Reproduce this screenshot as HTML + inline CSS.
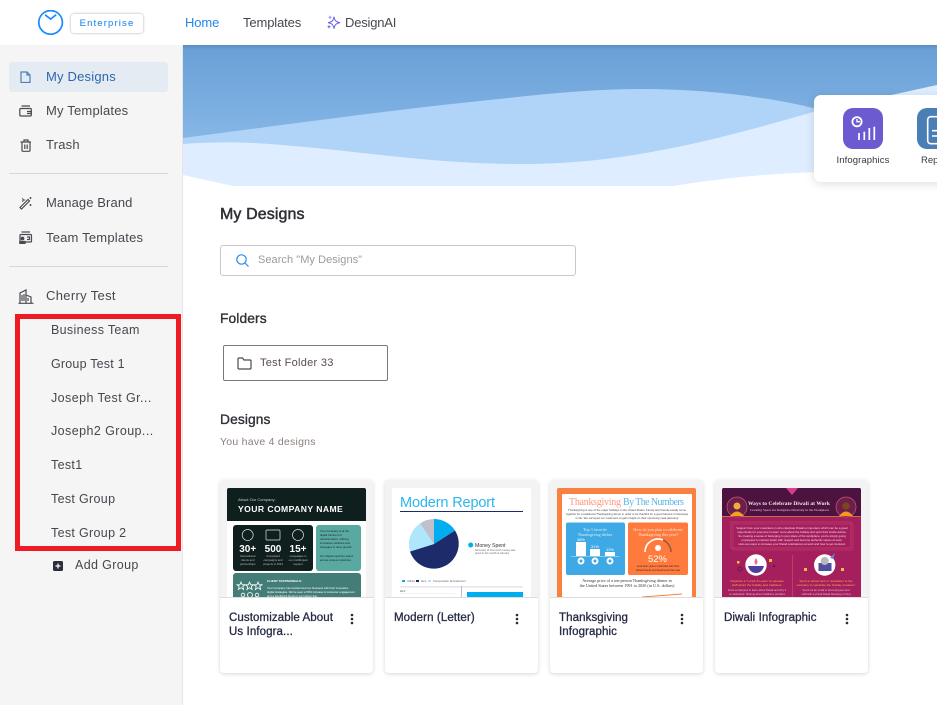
<!DOCTYPE html>
<html lang="en"><head><meta charset="utf-8"><title>My Designs</title>
<style>
*{box-sizing:border-box}
html,body{margin:0;padding:0;width:937px;height:705px;overflow:hidden;background:#fff;font-family:"Liberation Sans",sans-serif;color:#3d3d45}
.a{position:absolute}
.t{position:absolute;white-space:nowrap;line-height:16px;font-size:13px;letter-spacing:.2px;color:#47474f}
.nav{letter-spacing:-.12px}
.g{position:absolute;left:51px;white-space:nowrap;line-height:16px;font-size:12.5px;letter-spacing:.32px;color:#47474f}
.h{position:absolute;left:220px;white-space:nowrap;color:#2f3036;-webkit-text-stroke:.35px #2f3036}
.card{position:absolute;top:480px;width:153px;height:193px;background:#fff;border-radius:4px;box-shadow:0 1px 4px rgba(0,0,0,.16);overflow:hidden}
.card .top{position:absolute;left:0;top:0;width:153px;height:118px;background:#f3f3f3;border-bottom:1px solid #dedede}
.card svg.th{position:absolute;left:7px;top:8px;border-radius:2px 2px 0 0}
.card .n{position:absolute;left:9px;top:132px;width:112px;font-size:11.5px;line-height:13.5px;letter-spacing:.1px;color:#262a44;-webkit-text-stroke:.3px #262a44}
.card svg.m{position:absolute;left:130px;top:133px}
svg{display:block}
svg.i{position:absolute;fill:none;stroke:#4a4a50;stroke-width:1.2}
</style></head><body>

<!-- hero -->
<svg class="a" style="left:183px;top:45px" width="754" height="141" viewBox="0 0 754 141">
<defs><linearGradient id="hg" x1="0" y1="0" x2="0" y2="1"><stop offset="0" stop-color="#689fd6"/><stop offset="1" stop-color="#94c2ee"/></linearGradient></defs>
<rect width="754" height="141" fill="url(#hg)"/>
<path d="M0 93C100 80 200 66 288 57C360 49 410 44 457 44C520 44 580 51 630 63L754 92V141H0Z" fill="#b0d3f8"/>
<path d="M0 99C25 97 50 97 70 98C170 104 240 119 340 119C440 119 530 96 630 67L754 40V141H0Z" fill="#deedff"/>
<path d="M0 130L50 141H0Z" fill="#fff"/>
<path d="M490 141C540 133 590 128 640 127L754 125V141Z" fill="#fff"/>
</svg>

<!-- header -->
<div class="a" style="left:0;top:0;width:937px;height:45px;background:#fff;box-shadow:0 1px 4px rgba(0,0,0,.18)"></div>
<svg class="a" style="left:38px;top:10px" width="26" height="26" viewBox="0 0 26 26" fill="none" stroke="#1a8cff" stroke-width="1.7"><circle cx="12.6" cy="12.4" r="11.8"/><path d="M7.5 5.2L12.6 9L17.6 5.2" stroke-linecap="round"/></svg>
<div class="a" style="left:71px;top:14px;width:72px;height:18.5px;background:#fff;border-radius:3px;box-shadow:0 0 2.5px rgba(0,0,0,.35);text-align:center;font-size:9.5px;line-height:19.5px;letter-spacing:1.15px;color:#2a8cf0;-webkit-text-stroke:.1px #2a8cf0">Enterprise</div>
<div class="t nav" style="left:185px;top:15px;color:#1e88ee">Home</div>
<div class="t nav" style="left:243px;top:15px;color:#47474f">Templates</div>
<svg class="a" style="left:326px;top:14px" width="15" height="17" viewBox="0 0 15 17" fill="none" stroke="#6a5fe6" stroke-width="1"><path d="M8 2.7C8.5 6.5 10 8 14 8.7C10 9.3 8.5 11 8 14.7C7.5 11 6 9.3 2 8.7C6 8 7.5 6.5 8 2.7Z"/><path d="M4 1.3L4.6 2.7L6 3.3L4.6 3.9L4 5.3L3.4 3.9L2 3.3L3.4 2.7Z" fill="#9a80f0" stroke="none"/><path d="M3 10.7L3.6 12.1L5 12.7L3.6 13.3L3 14.7L2.4 13.3L1 12.7L2.4 12.1Z" fill="#4668e8" stroke="none"/></svg>
<div class="t nav" style="left:345px;top:15px;letter-spacing:-.2px">DesignAI</div>

<!-- sidebar -->
<div class="a" style="left:0;top:45px;width:183px;height:660px;background:#f5f5f5;border-right:1px solid #e6e6e6"></div>
<div class="a" style="left:9px;top:62px;width:159px;height:30px;background:#e4ebf3;border-radius:3px"></div>
<svg class="i" style="left:20px;top:71px;stroke:#4f80b8" width="11" height="12" viewBox="0 0 11 12"><path d="M1 1H7L10 4V11.5H1Z"/><path d="M7 1V4H10"/></svg>
<div class="t" style="left:46px;top:69px;color:#2a68ae">My Designs</div>
<svg class="i" style="left:19px;top:105px" width="14" height="12" viewBox="0 0 14 12"><rect x=".8" y="3.5" width="11.5" height="7.5" rx="1"/><path d="M2.5 1H11M8 6.5H12.3V8.5H8"/></svg>
<div class="t" style="left:46px;top:103px">My Templates</div>
<svg class="i" style="left:20px;top:139px" width="12" height="13" viewBox="0 0 12 13"><path d="M.5 3H11M2 3V11.5Q2 12.3 3 12.3H9Q10 12.3 10 11.5V3M4 3V1H8V3M4.8 5.5V10M7.2 5.5V10"/></svg>
<div class="t" style="left:46px;top:137px">Trash</div>
<div class="a" style="left:9px;top:173px;width:159px;height:1px;background:#d8d8d8"></div>
<svg class="i" style="left:19px;top:196px" width="14" height="14" viewBox="0 0 14 14"><path d="M1 11.5L9 3.5L10.5 5L2.5 13Z"/><path d="M3.5 2L4 3.5L5.5 4L4 4.5L3.5 6M11.5 1V3M10.5 2H12.5M11.5 8V10M10.5 9H12.5" stroke-width=".9"/></svg>
<div class="t" style="left:46px;top:195px;letter-spacing:.1px">Manage Brand</div>
<svg class="i" style="left:19px;top:231px" width="14" height="13" viewBox="0 0 14 13"><rect x="1" y="3.5" width="11.5" height="7.5" rx="1"/><path d="M2.5 1H11"/><circle cx="3.5" cy="7.5" r="1.3" fill="#4a4a50"/><path d="M.8 12.5V10.5H6V12.5Z" fill="#4a4a50"/><path d="M8 6H10.5V8.5H8"/></svg>
<div class="t" style="left:46px;top:230px">Team Templates</div>
<div class="a" style="left:9px;top:266px;width:159px;height:1px;background:#d8d8d8"></div>
<svg class="i" style="left:18px;top:289px" width="16" height="15" viewBox="0 0 16 15"><path d="M.5 14.3H15.5M2 14V4L8 1V14M8 6L13 8V14M4 6V12M6 5V12M10 9V12"/></svg>
<div class="t" style="left:46px;top:288px;letter-spacing:.33px">Cherry Test</div>
<div class="g" style="top:322px">Business Team</div>
<div class="g" style="top:356px;letter-spacing:.2px">Group Test 1</div>
<div class="g" style="top:390px;letter-spacing:.42px">Joseph Test Gr...</div>
<div class="g" style="top:423px;letter-spacing:.42px">Joseph2 Group...</div>
<div class="g" style="top:457px">Test1</div>
<div class="g" style="top:491px">Test Group</div>
<div class="g" style="top:525px">Test Group 2</div>
<svg class="a" style="left:53px;top:561px" width="10" height="10" viewBox="0 0 10 10"><rect width="10" height="10" rx="1.5" fill="#2b2e3a"/><path d="M5 2.5V7.5M2.5 5H7.5" stroke="#fff" stroke-width="1.2"/></svg>
<div class="t" style="left:75px;top:557px;font-size:12.5px;letter-spacing:.36px">Add Group</div>
<div class="a" style="left:15px;top:314px;width:166px;height:237px;border:5px solid #ed1c24"></div>

<!-- template types card -->
<div class="a" style="left:814px;top:95px;width:140px;height:87px;background:#fff;border-radius:7px;box-shadow:0 2px 10px rgba(0,0,0,.13)"></div>
<svg class="a" style="left:843px;top:108px" width="40" height="41" viewBox="0 0 40 41"><rect width="40" height="41" rx="10" fill="#6c5bd0"/><g fill="none" stroke="#fff"><circle cx="14" cy="13.7" r="4.6" stroke-width="1.8"/><path d="M14 11V13.7H17" stroke-width="1.4"/><path d="M16 32V25M21.3 32V23.7M26.3 32V20M31.3 32V18.7" stroke-width="1.7"/></g></svg>
<div class="a" style="left:823px;top:154px;width:80px;text-align:center;font-size:9.5px;line-height:14px;letter-spacing:.1px;color:#37373f">Infographics</div>
<svg class="a" style="left:917px;top:108px" width="40" height="41" viewBox="0 0 40 41"><rect width="40" height="41" rx="10" fill="#4a7fb5"/><g fill="none" stroke="#fff" stroke-width="1.6"><rect x="10.7" y="8.7" width="24" height="27" rx="3"/><path d="M15 22.7H30M15 28H30"/></g></svg>
<div class="a" style="left:921px;top:154px;font-size:9.5px;line-height:14px;color:#37373f">Rep</div>

<!-- content -->
<div class="h" style="top:206px;font-size:16px;line-height:18px;-webkit-text-stroke:.5px #2f3036;letter-spacing:.1px">My Designs</div>
<div class="a" style="left:220px;top:245px;width:356px;height:31px;border:1px solid #c9c9c9;border-radius:3px;background:#fff"></div>
<svg class="a" style="left:236px;top:254px" width="13" height="13" viewBox="0 0 13 13" fill="none" stroke="#2a8cf0" stroke-width="1.2"><circle cx="5.5" cy="5.5" r="4.7"/><path d="M9 9L12.5 12.5"/></svg>
<div class="t" style="left:258px;top:252px;font-size:11px;letter-spacing:.05px;color:#9b9b9b">Search "My Designs"</div>
<div class="h" style="top:311px;font-size:13.8px;line-height:16px;letter-spacing:.1px">Folders</div>
<div class="a" style="left:223px;top:345px;width:165px;height:36px;border:1px solid #7a7a7a;border-radius:2px;background:#fff"></div>
<svg class="a" style="left:237px;top:357px" width="15" height="13" viewBox="0 0 15 13" fill="none" stroke="#4a4a50" stroke-width="1.2"><path d="M1 11V2Q1 1 2 1H5.5L7 3H13Q14 3 14 4V11Q14 12 13 12H2Q1 12 1 11Z"/></svg>
<div class="t" style="left:260px;top:355px;font-size:11px;letter-spacing:.28px;color:#5a4a50">Test Folder 33</div>
<div class="h" style="top:412px;font-size:13.8px;line-height:16px;letter-spacing:.1px">Designs</div>
<div class="t" style="left:220px;top:434px;font-size:10.5px;letter-spacing:.25px;color:#8d7f7c">You have 4 designs</div>

<!-- card 1 -->
<div class="card" style="left:220px"><div class="top"></div>
<svg class="th" width="139" height="109" viewBox="0 0 139 109" font-family="Liberation Sans, sans-serif">
<rect width="139" height="109" fill="#fff"/><rect width="139" height="33" fill="#0f1f1e"/>
<text x="11" y="13" font-size="4" fill="#ccc">About Our Company:</text>
<text x="11" y="24" font-size="8.6" font-weight="bold" fill="#fff" letter-spacing=".42">YOUR COMPANY NAME</text>
<rect x="6" y="37" width="80" height="46" rx="3" fill="#0f1f1e"/>
<rect x="89" y="37" width="45" height="46" rx="3" fill="#5aa9a0"/>
<rect x="6" y="85" width="128" height="30" rx="3" fill="#437d77"/>
<g fill="none" stroke="#dde" stroke-width=".7"><circle cx="20.7" cy="47" r="5.5"/><rect x="39" y="42" width="14" height="10" rx="1"/><circle cx="71" cy="47" r="5.5"/></g>
<g fill="#fff" font-weight="bold" font-size="10" text-anchor="middle"><text x="20.7" y="64">30+</text><text x="46" y="64">500</text><text x="71" y="64">15+</text></g>
<g fill="#bbb" font-size="2.8" text-anchor="middle"><text x="20.7" y="69">International</text><text x="20.7" y="73">clients and</text><text x="20.7" y="77">partnerships</text><text x="46" y="69">Completed</text><text x="46" y="73">campaigns and</text><text x="46" y="77">projects in 2024</text><text x="71" y="69">Languages in</text><text x="71" y="73">our multilingual</text><text x="71" y="77">support</text></g>
<g fill="#123" font-size="2.8"><text x="93" y="44">Your Company is at the</text><text x="93" y="48">digital forefront of</text><text x="93" y="52">transformation, offering</text><text x="93" y="56">innovative solutions and</text><text x="93" y="60">strategies to drive growth.</text><text x="93" y="69">Our digital expertise spans</text><text x="93" y="73">across various industries.</text></g>
<g fill="#fff" font-size="3"><text x="40" y="94" font-weight="bold">CLIENT TESTIMONIALS:</text><text x="40" y="101" font-size="2.8">Your Company has transformed our business with their innovative</text><text x="40" y="105" font-size="2.8">digital strategies. We've seen a 50% increase in customer engagement</text><text x="40" y="109" font-size="2.8">and a significant boost in our bottom line.</text></g>
<g fill="none" stroke="#fff" stroke-width=".8"><path d="M14 94L15.2 96.8H18L15.8 98.5L16.6 101.5L14 99.7L11.4 101.5L12.2 98.5L10 96.8H12.8Z"/><path d="M22.5 94L23.7 96.8H26.5L24.3 98.5L25.1 101.5L22.5 99.7L19.9 101.5L20.7 98.5L18.5 96.8H21.3Z"/><path d="M31 94L32.2 96.8H35L32.8 98.5L33.6 101.5L31 99.7L28.4 101.5L29.2 98.5L27 96.8H29.8Z"/><circle cx="16" cy="107" r="1.8"/><circle cx="23" cy="107" r="2.5"/><circle cx="30" cy="107" r="1.8"/></g>
</svg>
<div class="n">Customizable About Us Infogra...</div>
<svg class="m" width="4" height="12"><circle cx="2" cy="2" r="1.3" fill="#2b2b33"/><circle cx="2" cy="6" r="1.3" fill="#2b2b33"/><circle cx="2" cy="10" r="1.3" fill="#2b2b33"/></svg>
</div>

<!-- card 2 -->
<div class="card" style="left:385px"><div class="top"></div>
<svg class="th" width="139" height="109" viewBox="0 0 139 109" font-family="Liberation Sans, sans-serif">
<rect width="139" height="109" fill="#fff"/>
<text x="8" y="19" font-size="14.5" fill="#2bb6ee" textLength="95">Modern Report</text>
<rect x="8" y="23" width="123" height="1" fill="#1d2b6b"/>
<path d="M42 56V31A25 25 0 0 1 63 42.5Z" fill="#00aeef"/>
<path d="M42 56L63 42.5A25 25 0 1 1 18 63.5Z" fill="#1d2b6b"/>
<path d="M42 56L18 63.5A25 25 0 0 1 28 35.5Z" fill="#aee6fb"/>
<path d="M42 56L28 35.5A25 25 0 0 1 42 31Z" fill="#c0c0cc"/>
<circle cx="78.7" cy="57" r="2.5" fill="#00aeef"/>
<text x="83" y="59" font-size="5.2" fill="#333">Money Spent</text>
<g font-size="2.6" fill="#666"><text x="83" y="63">Summary of how much money was</text><text x="83" y="66">spent in the month of January</text></g>
<g font-size="2.5" fill="#666"><rect x="10" y="92" width="3" height="2" fill="#00aeef"/><text x="15" y="94">Utilities</text><rect x="24" y="92" width="3" height="2" fill="#1d2b6b"/><text x="29" y="94">Rent</text><rect x="36" y="92" width="3" height="2" fill="#aee6fb"/><text x="41" y="94">Transportation</text><text x="58" y="94">Entertainment</text></g>
<rect x="8" y="98.5" width="123" height=".8" fill="#c8cce0"/>
<rect x="69" y="98" width=".7" height="11" fill="#9da3c8"/>
<rect x="75" y="104" width="56" height="5" fill="#00aeef"/>
<rect x="8" y="105" width="55" height=".4" fill="#ddd"/>
<text x="8" y="104" font-size="2.5" fill="#555">Rent</text>
</svg>
<div class="n">Modern (Letter)</div>
<svg class="m" width="4" height="12"><circle cx="2" cy="2" r="1.3" fill="#2b2b33"/><circle cx="2" cy="6" r="1.3" fill="#2b2b33"/><circle cx="2" cy="10" r="1.3" fill="#2b2b33"/></svg>
</div>

<!-- card 3 -->
<div class="card" style="left:550px"><div class="top"></div>
<svg class="th" width="139" height="109" viewBox="0 0 139 109" font-family="Liberation Serif, serif">
<rect width="139" height="109" fill="#f9803e"/><rect x="5" y="6" width="130" height="103" rx="1" fill="#fff"/>
<text x="12" y="17" font-size="10" fill="#fb9a7a" textLength="52">Thanksgiving</text>
<text x="66" y="17" font-size="10" fill="#5cb8ea" textLength="61">By The Numbers</text>
<g font-size="2.8" fill="#444" text-anchor="middle" font-family="Liberation Sans, sans-serif"><text x="70" y="23">Thanksgiving is one of the major holidays in the United States. Family and friends usually come</text><text x="70" y="27">together for a traditional Thanksgiving dinner in order to be thankful for a good harvest or blessings</text><text x="70" y="31">in life. We surveyed our customers to gain insight on their upcoming meal planning!</text></g>
<rect x="9" y="34.5" width="59" height="52.5" rx="2" fill="#3fa9e5"/><rect x="71" y="34.5" width="60" height="52.5" rx="2" fill="#ff7a3d"/>
<g font-size="4.2" text-anchor="middle" fill="#d7eefa"><text x="38" y="43">Top 3 favorite</text><text x="38" y="48">Thanksgiving dishes</text></g>
<g font-size="4.2" text-anchor="middle" fill="#ffe6d6"><text x="101" y="43">How do you plan to celebrate</text><text x="101" y="48">Thanksgiving this year?</text></g>
<rect x="19" y="54" width="10" height="14" fill="#fff"/><rect x="33" y="61" width="10" height="7" fill="#fff"/><rect x="48" y="64" width="10" height="4" fill="#fff"/>
<g font-size="4" fill="#fff" text-anchor="middle" font-family="Liberation Sans, sans-serif"><text x="24" y="53">38%</text><text x="38" y="60">31%</text><text x="53" y="63">12%</text></g>
<rect x="14" y="68" width="48" height=".5" fill="#cfeafa"/>
<g fill="none" stroke="#fff" stroke-width="1.9"><circle cx="24" cy="73" r="2.5"/><circle cx="38" cy="73" r="2.5"/><circle cx="53" cy="73" r="2.5"/></g>
<path d="M88 64A13 13 0 0 1 106 52" fill="none" stroke="#fff" stroke-width="1.6"/><path d="M106 52A13 13 0 0 1 114 64" fill="none" stroke="#9a5b3a" stroke-width="1.6"/>
<circle cx="101" cy="60" r="3" fill="#fff"/>
<text x="100.5" y="74" font-size="9.5" fill="#fff" text-anchor="middle" font-family="Liberation Sans, sans-serif">52%</text>
<g font-size="2.6" text-anchor="middle" fill="#422" font-family="Liberation Sans, sans-serif"><text x="101" y="79">Less than year or celebrate with their</text><text x="101" y="83">closest family and loved ones this year</text></g>
<g font-size="4.2" text-anchor="middle" fill="#333"><text x="70" y="94">Average price of a ten-person Thanksgiving dinner in</text><text x="70" y="99">the United States between 1991 to 2020 (in U.S. dollars)</text></g>
<path d="M85 109L105 107.5L125 106" stroke="#f9803e" fill="none"/>
</svg>
<div class="n">Thanksgiving Infographic</div>
<svg class="m" width="4" height="12"><circle cx="2" cy="2" r="1.3" fill="#2b2b33"/><circle cx="2" cy="6" r="1.3" fill="#2b2b33"/><circle cx="2" cy="10" r="1.3" fill="#2b2b33"/></svg>
</div>

<!-- card 4 -->
<div class="card" style="left:715px"><div class="top"></div>
<svg class="th" width="139" height="109" viewBox="0 0 139 109" font-family="Liberation Serif, serif">
<rect width="139" height="109" fill="#a51e5e"/><rect width="139" height="28" fill="#4d1340"/>
<rect y="28" width="139" height=".7" fill="#d8913f"/>
<path d="M64 0H76L70 7Z" fill="#d83e8c"/>
<circle cx="15" cy="19" r="10" fill="#6d1f4a" stroke="#c75a7c" stroke-width=".7"/><circle cx="124" cy="19" r="10" fill="#6d1f4a" stroke="#c75a7c" stroke-width=".7"/>
<path d="M8 28Q15 19 22 28Z" fill="#f0a31e"/><circle cx="15" cy="18" r="3.5" fill="#efae3c"/>
<path d="M117 28Q124 19 131 28Z" fill="#f39a1e"/><circle cx="124" cy="18" r="3.8" fill="#7b4520"/>
<text x="67" y="17" font-size="5.4" font-weight="bold" fill="#f5e8ef" text-anchor="middle" letter-spacing=".1">Ways to Celebrate Diwali at Work</text>
<text x="67.5" y="23" font-size="3.5" fill="#e5c7d6" text-anchor="middle">Creating Space for Religious Diversity in the Workplace</text>
<rect x="9" y="34" width="120" height="26" fill="none" stroke="#c9576f" stroke-width=".5"/><rect x="11" y="36" width="120" height="26" fill="none" stroke="#c9576f" stroke-width=".4"/>
<g font-size="2.9" fill="#f3dce6" text-anchor="middle" font-family="Liberation Sans, sans-serif"><text x="70" y="41">Support from your coworkers in who celebrate Diwali is important, which can be a good</text><text x="70" y="45">opportunity for everyone to learn more about the holiday and pivot their inside advice.</text><text x="70" y="49">So creating a sense of belonging in your place of the workplace, you're simply going</text><text x="70" y="53">employees to interact better with respect and become authentic selves at work.</text><text x="70" y="57">Here are ways to increase your Diwali celebrations at work and how to get involved.</text></g>
<rect x="70" y="67" width=".6" height="42" fill="#c9576f"/>
<circle cx="34" cy="77" r="10.7" fill="#fff"/><circle cx="102.7" cy="77" r="10.7" fill="#fff"/>
<path d="M26 78H42Q40 85 34 85Q28 85 26 78Z" fill="#4f3e9e"/><path d="M34 70Q37 74 34 77Q31 74 34 70Z" fill="#ea6c8f"/>
<rect x="96.5" y="75" width="13" height="8" fill="#4f4ea0"/><circle cx="102.7" cy="73" r="4" fill="#b9b9b9"/><path d="M108 70L113 65L111 71Z" fill="#5e8fe8"/>
<rect x="47" y="71" width="3" height="3" fill="#f5c13a"/><rect x="15" y="73" width="2.5" height="2.5" fill="#f5c13a"/><circle cx="18" cy="81" r="2" fill="none" stroke="#4d1340" stroke-width=".6"/>
<rect x="82" y="80" width="3" height="3" fill="#f5c13a"/><rect x="119" y="80" width="3" height="3" fill="#f5c13a"/><circle cx="52" cy="78" r="1" fill="#4d1340"/>
<g font-size="3.1" fill="#ffb042" text-anchor="middle" font-family="Liberation Sans, sans-serif"><text x="35" y="94">Organize a "Lunch &amp; Learn" to educate</text><text x="35" y="98">staff about the holiday and traditions.</text><text x="104" y="94">Send a virtual card or newsletter to the</text><text x="104" y="98">company to celebrate the holiday occasion.</text></g>
<g font-size="2.7" fill="#e3bdd0" text-anchor="middle" font-family="Liberation Sans, sans-serif"><text x="35" y="103">Invite employees to learn about Diwali and why it</text><text x="35" y="107">is celebrated. Sharing about traditions provides</text><text x="104" y="103">Send out an email to all employees and</text><text x="104" y="107">staff with a virtual Diwali blessing to bring</text></g>
</svg>
<div class="n">Diwali Infographic</div>
<svg class="m" width="4" height="12"><circle cx="2" cy="2" r="1.3" fill="#2b2b33"/><circle cx="2" cy="6" r="1.3" fill="#2b2b33"/><circle cx="2" cy="10" r="1.3" fill="#2b2b33"/></svg>
</div>

</body></html>
